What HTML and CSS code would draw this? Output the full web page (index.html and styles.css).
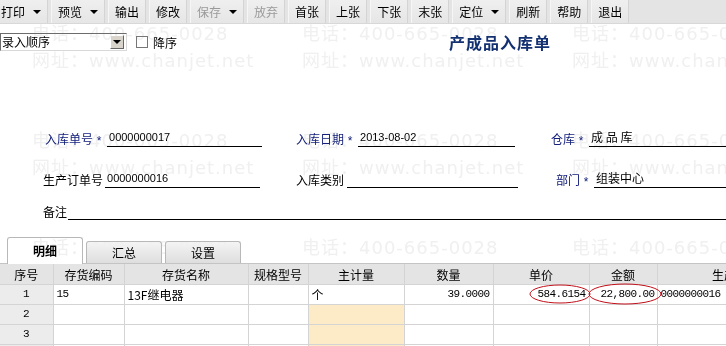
FILE: index.html
```html
<!DOCTYPE html><html>
<head>
  <title>产成品入库单</title>
  <link rel="stylesheet" href="styles.css">
</head>
<body>
  <div class="toolbar">
    <span class="btn">打印<i class="arrow"></i></span>
    <span class="btn">预览<i class="arrow"></i></span>
    <span class="btn">输出</span>
    <span class="btn">修改</span>
    <span class="btn off">保存<i class="arrow"></i></span>
    <span class="btn off">放弃</span>
    <span class="btn">首张</span>
    <span class="btn">上张</span>
    <span class="btn">下张</span>
    <span class="btn">末张</span>
    <span class="btn">定位<i class="arrow"></i></span>
    <span class="btn">刷新</span>
    <span class="btn">帮助</span>
    <span class="btn">退出</span>
  </div>

  <div class="options">
    <div class="combo"><span class="combo-text">录入顺序</span><span class="combo-btn"><i class="arrow"></i></span></div>
    <span class="check"></span><span class="check-label">降序</span>
    <h1 class="title">产成品入库单</h1>
  </div>

  <div class="form">
    <div class="row r1">
      <div class="field f1"><span class="lbl req">入库单号</span><span class="star">*</span><span class="line w155">0000000017</span></div>
      <div class="field f2"><span class="lbl req">入库日期</span><span class="star">*</span><span class="line w157">2013-08-02</span></div>
      <div class="field f3"><span class="lbl req">仓库</span><span class="star">*</span><span class="line grow cn">成 品 库</span></div>
    </div>
    <div class="row r2">
      <div class="field f1"><span class="lbl">生产订单号</span><span class="line w155 ml2">0000000016</span></div>
      <div class="field f2"><span class="lbl">入库类别</span><span class="line w171 ml3"></span></div>
      <div class="field f3b"><span class="lbl req">部门</span><span class="star">*</span><span class="line grow cn">组装中心</span></div>
    </div>
    <div class="row r3">
      <div class="field grow"><span class="lbl">备注</span><span class="line grow ml1"></span></div>
    </div>
  </div>

  <div class="tabs">
    <span class="tab active">明细</span>
    <span class="tab">汇总</span>
    <span class="tab">设置</span>
  </div>

  <div class="grid-wrap">
    <table class="grid">
      <colgroup>
        <col style="width:53px"><col style="width:71px"><col style="width:124px"><col style="width:60px">
        <col style="width:96px"><col style="width:89px"><col style="width:96px"><col style="width:68px"><col style="width:170px">
      </colgroup>
      <tr class="head">
        <th>序号</th><th>存货编码</th><th>存货名称</th><th>规格型号</th><th>主计量</th><th>数量</th><th>单价</th><th>金额</th><th>生产订单号</th>
      </tr>
      <tr>
        <td class="no">1</td><td class="num-l">15</td><td>13F继电器</td><td></td><td>个</td>
        <td class="num">39.0000</td><td class="num">584.6154</td><td class="num tight">22,800.00</td><td class="num-l">0000000016</td>
      </tr>
      <tr>
        <td class="no">2</td><td></td><td></td><td></td><td class="unit"></td><td></td><td></td><td></td><td></td>
      </tr>
      <tr>
        <td class="no">3</td><td></td><td></td><td></td><td class="unit"></td><td></td><td></td><td></td><td></td>
      </tr>
      <tr>
        <td class="no">4</td><td></td><td></td><td></td><td class="unit"></td><td></td><td></td><td></td><td></td>
      </tr>
    </table>
  </div>

  <svg class="marks" width="726" height="346" viewBox="0 0 726 346">
    <ellipse cx="560" cy="294" rx="30" ry="9" fill="none" stroke="#c0101a" stroke-width="1"/>
    <ellipse cx="625" cy="294" rx="36" ry="10" fill="none" stroke="#c0101a" stroke-width="1"/>
  </svg>

  <div class="watermark">
    <div class="wm"><span>电话：400-665-0028</span><span>网址：www.chanjet.net</span></div>
    <div class="wm"><span>电话：400-665-0028</span><span>网址：www.chanjet.net</span></div>
    <div class="wm"><span>电话：400-665-0028</span><span>网址：www.chanjet.net</span></div>
    <div class="wm"><span>电话：400-665-0028</span><span>网址：www.chanjet.net</span></div>
    <div class="wm"><span>电话：400-665-0028</span><span>网址：www.chanjet.net</span></div>
    <div class="wm"><span>电话：400-665-0028</span><span>网址：www.chanjet.net</span></div>
    <div class="wm"><span>电话：400-665-0028</span><span>网址：www.chanjet.net</span></div>
    <div class="wm"><span>电话：400-665-0028</span><span>网址：www.chanjet.net</span></div>
    <div class="wm"><span>电话：400-665-0028</span><span>网址：www.chanjet.net</span></div>
  </div>
</body>
</html>
```

FILE: styles.css
```css
html, body {
  margin: 0;
  padding: 0;
  width: 726px;
  height: 346px;
  overflow: hidden;
  background: #fff;
}
body {
  position: relative;
  font-family: "Noto Sans CJK SC", "Liberation Sans", sans-serif;
  font-size: 12px;
  color: #000;
}

/* toolbar */
.toolbar {
  display: flex;
  gap: 3px;
  height: 23px;
  margin-left: -6px;
  background: #e4e4e4;
  border-bottom: 1px solid #d8d8d8;
  align-items: stretch;
}
.btn {
  display: flex;
  align-items: center;
  padding: 0 6px;
  background: linear-gradient(#efefef, #e6e6e6);
  border-left: 1px solid #f6f6f6;
  border-right: 1px solid #d4d4d4;
  line-height: 23px;
}
.btn.off { color: #9a9a9a; }
.arrow {
  display: inline-block;
  width: 0;
  height: 0;
  margin-left: 8px;
  border-left: 4px solid transparent;
  border-right: 4px solid transparent;
  border-top: 4px solid #000;
}

/* sort options + title */
.options {
  display: flex;
  align-items: center;
  height: 18px;
  margin-top: 9px;
}
.combo {
  display: flex;
  width: 125px;
  height: 16px;
  border: 1px solid #6c6c6c;
  border-right-color: #d8d8d8;
  border-bottom-color: #d8d8d8;
  background: #fff;
}
.combo-text {
  flex: 1;
  padding-left: 1px;
  line-height: 16px;
}
.combo-btn {
  display: flex;
  align-items: center;
  justify-content: center;
  width: 14px;
  margin: 1px 2px 1px 0;
  background: #d8d4cc;
  border: 1px solid #fff;
  border-right-color: #666;
  border-bottom-color: #666;
  box-sizing: border-box;
}
.combo-btn .arrow { margin: 0; }
.check {
  width: 10px;
  height: 10px;
  margin-left: 9px;
  border: 1px solid #777;
  background: #fff;
}
.check-label { margin-left: 5px; }
.title {
  margin: 0 0 0 272px;
  font-size: 16px;
  font-weight: bold;
  letter-spacing: 1px;
  color: #133170;
  line-height: 18px;
}

/* header form */
.form { padding-top: 78px; }
.row {
  display: flex;
  height: 18px;
  padding-left: 43px;
  align-items: flex-end;
}
.r2 { margin-top: 23px; }
.r3 { margin-top: 14px; }
.field {
  display: flex;
  align-items: flex-end;
  line-height: 16px;
}
.f1 { width: 253px; }
.f2 { width: 255px; }
.f3 { flex: 1; }
.f3b { flex: 1; padding-left: 5px; }
.r1 .f1 .lbl { margin-left: 2px; }
.lbl.req { color: #14207a; }
.star {
  width: 12px;
  text-align: center;
  color: #14207a;
  font-family: "Liberation Sans", sans-serif;
  font-size: 12px;
  line-height: 12px;
  margin-right: 2px;
}
.line {
  display: block;
  height: 16px;
  padding-left: 2px;
  border-bottom: 1px solid #000;
  font-family: "Liberation Sans", sans-serif;
  font-size: 11px;
  line-height: 14px;
  box-sizing: content-box;
}
.line.cn { font-family: "Noto Sans CJK SC", sans-serif; font-size: 12px; }
.w155 { width: 153px; }
.w157 { width: 155px; }
.w171 { width: 169px; }
.ml1 { margin-left: 1px; }
.ml2 { margin-left: 2px; }
.ml3 { margin-left: 3px; }
.grow { flex: 1; }

/* tabs */
.tabs {
  display: flex;
  align-items: flex-end;
  height: 27px;
  margin-top: 16px;
  padding-left: 7px;
  gap: 3px;
  border-bottom: 1px solid #c4c4c4;
}
.tab {
  width: 74px;
  height: 21px;
  text-align: center;
  line-height: 21px;
  border: 1px solid #b8b8b8;
  border-bottom: none;
  border-radius: 3px 3px 0 0;
  background: linear-gradient(#f4f4f4, #dedede);
}
.tab.active {
  width: 74px;
  height: 26px;
  line-height: 26px;
  margin-bottom: -1px;
  background: #fff;
  font-weight: bold;
}

/* detail grid */
.grid-wrap {
  width: 726px;
  overflow: hidden;
}
.grid {
  table-layout: fixed;
  border-collapse: collapse;
  width: 827px;
}
.grid th, .grid td {
  height: 19px;
  padding: 0 3px;
  border: 1px solid #d4d4d4;
  white-space: nowrap;
  overflow: hidden;
  font-weight: normal;
  line-height: 19px;
}
.grid tr:first-child th { border-top: none; }
.grid th:first-child, .grid td:first-child { border-left: none; }
.head th {
  height: 20px;
  background: #e4e4e4;
  text-align: center;
}
.no {
  background: #ececec;
  text-align: center;
  font-family: "Liberation Mono", monospace;
  font-size: 11px;
}
.num, .num-l {
  font-family: "Liberation Mono", monospace;
  font-size: 11px;
  letter-spacing: -0.6px;
}
.num { text-align: right; }
.num.tight { padding-right: 2px; }
.unit { background: #fdebc8; }

/* overlays */
.marks {
  position: absolute;
  left: 0;
  top: 0;
  pointer-events: none;
}
.watermark {
  position: absolute;
  left: 32px;
  top: 23px;
  display: grid;
  grid-template-columns: repeat(3, 270px);
  grid-auto-rows: 107px;
  pointer-events: none;
  mix-blend-mode: darken;
}
.wm {
  display: flex;
  flex-direction: column;
  gap: 5px;
}
.wm span {
  font-family: "DejaVu Sans", "Noto Sans CJK SC", sans-serif;
  font-size: 18px;
  line-height: 22px;
  letter-spacing: 1px;
  color: #f0f0f0;
  white-space: nowrap;
}
```
